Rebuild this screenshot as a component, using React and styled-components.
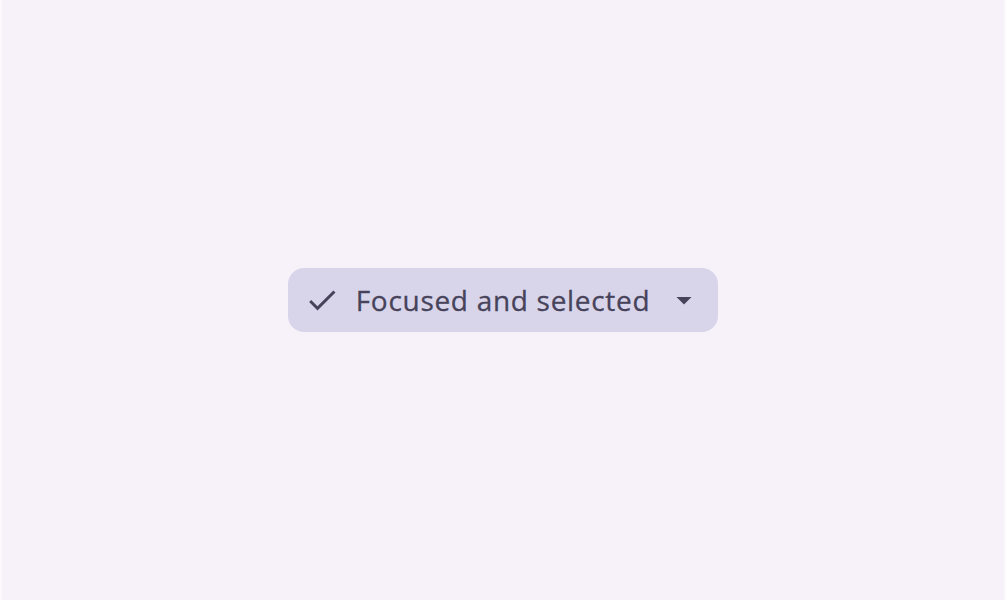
import React from "react";
import styled, { createGlobalStyle } from "styled-components";

const Global = createGlobalStyle`
  html, body { margin: 0; padding: 0; }
  body { background: #f7f2fa; font-family: "Open Sans", Roboto, sans-serif; }
`;

const Page = styled.div`
  height: 600px;
  box-sizing: border-box;
  border-left: 2px solid #fbf9fc;
  border-right: 2px solid #fbf9fc;
  background: #f7f2fa;
  display: flex;
  align-items: center;
  justify-content: center;
`;

const Chip = styled.button`
  display: flex;
  align-items: center;
  gap: 16px;
  height: 64px;
  padding: 0 16px;
  border: none;
  border-radius: 16px;
  background: #d8d5eb;
  color: #47435a;
  font-family: "Open Sans", Roboto, sans-serif;
  font-size: 28px;
  font-weight: 400;
  letter-spacing: 0.7px;
  cursor: pointer;
`;

const Icon = styled.svg`
  width: 36px;
  height: 36px;
  flex: none;
  fill: currentColor;
`;

const Label = styled.span`
  line-height: 40px;
  -webkit-text-stroke: 0.3px currentColor;
`;

export default function App() {
  return (
    <>
      <Global />
      <Page>
        <Chip>
          <Icon viewBox="0 0 24 24">
            <path d="M9 16.17 4.83 12l-1.42 1.41L9 19 21 7l-1.41-1.41z" />
          </Icon>
          <Label>Focused and selected</Label>
          <Icon viewBox="0 0 24 24">
            <path d="M7 10l5 5 5-5z" />
          </Icon>
        </Chip>
      </Page>
    </>
  );
}
